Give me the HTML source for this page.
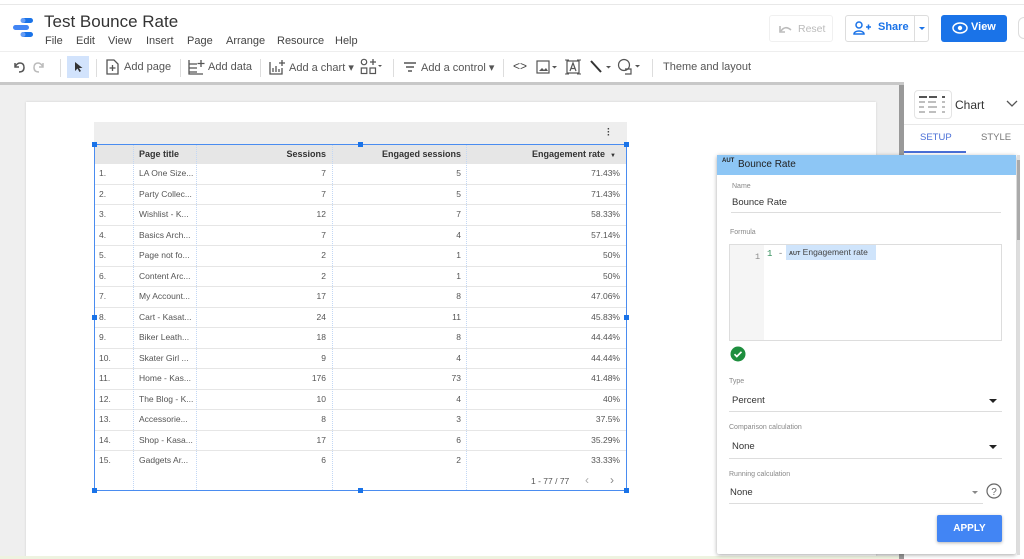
<!DOCTYPE html>
<html><head><meta charset="utf-8">
<style>
*{box-sizing:border-box;margin:0;padding:0}
body{width:1024px;height:559px;overflow:hidden;position:relative;background:#fff;font-family:"Liberation Sans",sans-serif;color:#3c4043}
.a{position:absolute}
.tb{font-size:11px;color:#555;white-space:nowrap;position:absolute;top:61px}
.sep{position:absolute;top:59px;width:1px;height:18px;background:#ddd}
.row{position:absolute;left:95px;width:531px;height:20.5px;border-bottom:1px solid #e6e6e6;font-size:8.5px;color:#555}
.row span{position:absolute;top:4px}
.vl{position:absolute;top:144px;height:346px;border-left:1px dotted #c2d7f5}
.h{position:absolute;width:5px;height:5px;background:#1a73e8}
.lbl{position:absolute;font-size:7px;color:#888}
.val{position:absolute;font-size:9.5px;color:#333}
.ul{position:absolute;height:1px;background:#ddd}
.m{position:absolute;top:35px;font-size:11px;color:#444}
</style></head><body>
<div class="a" style="left:0;top:4px;width:1024px;height:1px;background:#e8e8e8"></div>
<svg class="a" style="left:12px;top:16px" width="24" height="24" viewBox="0 0 24 24"><rect x="9" y="2" width="12" height="5" rx="2.5" fill="#1a73e8"/><rect x="1" y="9" width="16" height="5" rx="2.5" fill="#4285f4"/><rect x="9" y="16" width="12" height="5" rx="2.5" fill="#1a73e8"/><circle cx="11" cy="4.5" r="2.5" fill="#669df6"/><circle cx="11" cy="18.5" r="2.5" fill="#669df6"/></svg>
<div class="a" style="left:44px;top:12px;font-size:17px;color:#333">Test Bounce Rate</div>
<span class="m" style="left:45px">File</span><span class="m" style="left:76px">Edit</span><span class="m" style="left:108px">View</span><span class="m" style="left:146px">Insert</span><span class="m" style="left:187px">Page</span><span class="m" style="left:226px">Arrange</span><span class="m" style="left:277px">Resource</span><span class="m" style="left:335px">Help</span>
<div class="a" style="left:769px;top:15px;width:64px;height:27px;border:1px solid #f0f0f0;border-radius:3px;font-size:10.5px;color:#bbb;padding:7px 0 0 28px">Reset</div>
<svg class="a" style="left:779px;top:23px" width="14" height="10"><path d="M2 8 Q6 2 12 7" stroke="#bbb" stroke-width="1.6" fill="none"/><path d="M1 3v6h5" stroke="#bbb" stroke-width="1.6" fill="none"/></svg>
<div class="a" style="left:845px;top:15px;width:84px;height:27px;border:1px solid #ddd;border-radius:3px"></div>
<div class="a" style="left:914px;top:15px;width:1px;height:27px;background:#ddd"></div>
<svg class="a" style="left:853px;top:21px" width="18" height="14"><circle cx="6" cy="4" r="3" stroke="#1a73e8" stroke-width="1.5" fill="none"/><path d="M1 13c0-4 10-4 10 0z" stroke="#1a73e8" stroke-width="1.5" fill="none"/><path d="M13 6h5M15.5 3.5v5" stroke="#1a73e8" stroke-width="1.5"/></svg>
<div class="a" style="left:878px;top:21px;font-size:11px;color:#1a73e8;font-weight:bold">Share</div>
<div class="a" style="left:919px;top:27px;border:3px solid transparent;border-top:3px solid #1a73e8"></div>
<div class="a" style="left:941px;top:15px;width:66px;height:27px;background:#1a73e8;border-radius:3px"></div>
<svg class="a" style="left:952px;top:22px" width="16" height="12"><ellipse cx="8" cy="6" rx="7" ry="5" stroke="#fff" stroke-width="1.5" fill="none"/><circle cx="8" cy="6" r="2.2" fill="#fff"/></svg>
<div class="a" style="left:971px;top:21px;font-size:11px;color:#fff;font-weight:bold">View</div>
<div class="a" style="left:1018px;top:17px;width:12px;height:22px;border:1px solid #ddd;border-radius:11px"></div>
<div class="a" style="left:0;top:51px;width:1024px;height:1px;background:#eee"></div>
<svg class="a" style="left:12px;top:60px" width="34" height="14"><path d="M3 3v4h4M3 7 Q5 3 8 3 Q12 3 12 7.5 Q12 12 7 12" stroke="#555" stroke-width="1.5" fill="none"/><path d="M31 3v4h-4M31 7 Q29 3 26 3 Q22 3 22 7.5 Q22 12 27 12" stroke="#bbb" stroke-width="1.5" fill="none"/></svg>
<div class="sep" style="left:60px"></div>
<div class="a" style="left:67px;top:56px;width:22px;height:22px;background:#d2e3fc"></div>
<svg class="a" style="left:74px;top:61px" width="10" height="12"><path d="M1 1 L1 10 L3.5 7.5 L5.5 11 L7 10 L5 7 L8.5 7 Z" fill="#333"/></svg>
<div class="sep" style="left:96px"></div>
<svg class="a" style="left:106px;top:59px" width="13" height="16"><path d="M1 1h7l4 4v10H1z" stroke="#555" stroke-width="1.3" fill="none"/><path d="M6.5 6v6M3.5 9h6" stroke="#555" stroke-width="1.3"/></svg>
<div class="tb" style="left:124px">Add page</div>
<div class="sep" style="left:180px"></div>
<svg class="a" style="left:188px;top:59px" width="17" height="16"><path d="M1 1v14h14M1 5h8M1 9h8M1 13h8" stroke="#555" stroke-width="1.3" fill="none"/><path d="M13 1v7M9.5 4.5h7" stroke="#555" stroke-width="1.3"/></svg>
<div class="tb" style="left:208px">Add data</div>
<div class="sep" style="left:260px"></div>
<svg class="a" style="left:269px;top:59px" width="17" height="16"><path d="M1 3v12h12V9" stroke="#555" stroke-width="1.3" fill="none"/><path d="M4 13V9M7 13V7M10 13v-3M13 1v6M10 4h6" stroke="#555" stroke-width="1.3"/></svg>
<div class="tb" style="left:289px">Add a chart ▾</div>
<svg class="a" style="left:360px;top:58px" width="22" height="17"><circle cx="4" cy="4" r="2.7" stroke="#555" stroke-width="1.2" fill="none"/><path d="M10 4h6M13 1v6" stroke="#555" stroke-width="1.3"/><rect x="1.3" y="10" width="5.5" height="5.5" stroke="#555" stroke-width="1.2" fill="none"/><rect x="10" y="10" width="5.5" height="5.5" stroke="#555" stroke-width="1.2" fill="none"/><path d="M18 7l2 2 2-2" fill="#555"/></svg>
<div class="sep" style="left:393px"></div>
<svg class="a" style="left:403px;top:61px" width="14" height="12"><path d="M1 2h12M3 6h8M5 10h4" stroke="#555" stroke-width="1.4"/></svg>
<div class="tb" style="left:421px">Add a control ▾</div>
<div class="sep" style="left:503px"></div>
<div class="tb" style="left:513px;font-size:12px;top:59px;color:#444">&lt;&gt;</div>
<svg class="a" style="left:536px;top:59px" width="24" height="16"><rect x="1" y="2" width="12" height="12" stroke="#555" stroke-width="1.2" fill="none"/><path d="M3 12l3-3 2 2 2-2 2 3z" fill="#555"/><path d="M16 7l2.5 2.5L21 7" fill="#555"/></svg>
<svg class="a" style="left:565px;top:59px" width="16" height="16"><rect x="2" y="2" width="12" height="12" stroke="#555" stroke-width="1.2" fill="none"/><path d="M5 12l3-8 3 8M6 9.5h4" stroke="#555" stroke-width="1.2" fill="none"/><path d="M0 1h4M12 1h4M0 15h4M12 15h4" stroke="#555"/></svg>
<svg class="a" style="left:589px;top:59px" width="26" height="16"><path d="M2 2l10 11" stroke="#333" stroke-width="2"/><path d="M17 7l2.5 2.5L22 7" fill="#555"/></svg>
<svg class="a" style="left:617px;top:58px" width="26" height="18"><circle cx="7" cy="7" r="5.5" stroke="#555" stroke-width="1.2" fill="none"/><path d="M8 11h6V16H8" stroke="#555" stroke-width="1.2" fill="none"/><path d="M18 7l2.5 2.5L23 7" fill="#555"/></svg>
<div class="sep" style="left:652px"></div>
<div class="tb" style="left:663px">Theme and layout</div>
<div class="a" style="left:0;top:82px;width:904px;height:3px;background:#c8c8c8"></div>
<div class="a" style="left:0;top:85px;width:900px;height:474px;background:#efefef"></div>
<div class="a" style="left:26px;top:102px;width:850px;height:457px;background:#fff;box-shadow:0 0 2px #ccc"></div>
<div class="a" style="left:0;top:556px;width:900px;height:3px;background:#eef3e0"></div>
<div class="a" style="left:899px;top:85px;width:5px;height:474px;background:#999"></div>
<div class="a" style="left:94px;top:122px;width:533px;height:22px;background:#eeeeee"></div>
<div class="a" style="left:607px;top:128px;font-size:10px;color:#444;font-weight:bold;line-height:3px">·<br>·<br>·</div>
<div class="a" style="left:95px;top:144px;width:531px;height:20px;background:#e6e6e6;font-size:9px;font-weight:bold;color:#333">
<span class="a" style="left:44px;top:5px">Page title</span>
<span class="a" style="right:300px;top:5px">Sessions</span>
<span class="a" style="right:165px;top:5px">Engaged sessions</span>
<span class="a" style="right:10px;top:5px">Engagement rate &nbsp;<small style="font-size:6px">▼</small></span></div>
<div class="row" style="top:164px"><span style="left:4px">1.</span><span style="left:44px">LA One Size...</span><span style="right:300px">7</span><span style="right:165px">5</span><span style="right:6px">71.43%</span></div>
<div class="row" style="top:184.5px"><span style="left:4px">2.</span><span style="left:44px">Party Collec...</span><span style="right:300px">7</span><span style="right:165px">5</span><span style="right:6px">71.43%</span></div>
<div class="row" style="top:205px"><span style="left:4px">3.</span><span style="left:44px">Wishlist - K...</span><span style="right:300px">12</span><span style="right:165px">7</span><span style="right:6px">58.33%</span></div>
<div class="row" style="top:225.5px"><span style="left:4px">4.</span><span style="left:44px">Basics Arch...</span><span style="right:300px">7</span><span style="right:165px">4</span><span style="right:6px">57.14%</span></div>
<div class="row" style="top:246px"><span style="left:4px">5.</span><span style="left:44px">Page not fo...</span><span style="right:300px">2</span><span style="right:165px">1</span><span style="right:6px">50%</span></div>
<div class="row" style="top:266.5px"><span style="left:4px">6.</span><span style="left:44px">Content Arc...</span><span style="right:300px">2</span><span style="right:165px">1</span><span style="right:6px">50%</span></div>
<div class="row" style="top:287px"><span style="left:4px">7.</span><span style="left:44px">My Account...</span><span style="right:300px">17</span><span style="right:165px">8</span><span style="right:6px">47.06%</span></div>
<div class="row" style="top:307.5px"><span style="left:4px">8.</span><span style="left:44px">Cart - Kasat...</span><span style="right:300px">24</span><span style="right:165px">11</span><span style="right:6px">45.83%</span></div>
<div class="row" style="top:328px"><span style="left:4px">9.</span><span style="left:44px">Biker Leath...</span><span style="right:300px">18</span><span style="right:165px">8</span><span style="right:6px">44.44%</span></div>
<div class="row" style="top:348.5px"><span style="left:4px">10.</span><span style="left:44px">Skater Girl ...</span><span style="right:300px">9</span><span style="right:165px">4</span><span style="right:6px">44.44%</span></div>
<div class="row" style="top:369px"><span style="left:4px">11.</span><span style="left:44px">Home - Kas...</span><span style="right:300px">176</span><span style="right:165px">73</span><span style="right:6px">41.48%</span></div>
<div class="row" style="top:389.5px"><span style="left:4px">12.</span><span style="left:44px">The Blog - K...</span><span style="right:300px">10</span><span style="right:165px">4</span><span style="right:6px">40%</span></div>
<div class="row" style="top:410px"><span style="left:4px">13.</span><span style="left:44px">Accessorie...</span><span style="right:300px">8</span><span style="right:165px">3</span><span style="right:6px">37.5%</span></div>
<div class="row" style="top:430.5px"><span style="left:4px">14.</span><span style="left:44px">Shop - Kasa...</span><span style="right:300px">17</span><span style="right:165px">6</span><span style="right:6px">35.29%</span></div>
<div class="row" style="top:451px;border-bottom:none"><span style="left:4px">15.</span><span style="left:44px">Gadgets Ar...</span><span style="right:300px">6</span><span style="right:165px">2</span><span style="right:6px">33.33%</span></div>
<div class="vl" style="left:133px"></div><div class="vl" style="left:196px"></div><div class="vl" style="left:332px"></div><div class="vl" style="left:466px"></div>
<div class="a" style="left:531px;top:476px;font-size:8.5px;color:#555">1 - 77 / 77</div>
<div class="a" style="left:585px;top:473px;font-size:12px;color:#aaa">‹</div>
<div class="a" style="left:610px;top:473px;font-size:12px;color:#888">›</div>
<div class="a" style="left:94px;top:144px;width:533px;height:347px;border:1px solid #4a8cf0"></div>
<div class="h" style="left:92px;top:142px"></div><div class="h" style="left:358px;top:142px"></div><div class="h" style="left:624px;top:142px"></div>
<div class="h" style="left:92px;top:315px"></div><div class="h" style="left:624px;top:315px"></div>
<div class="h" style="left:92px;top:488px"></div><div class="h" style="left:358px;top:488px"></div><div class="h" style="left:624px;top:488px"></div>
<div class="a" style="left:904px;top:85px;width:120px;height:474px;background:#fff"></div>
<div class="a" style="left:914px;top:90px;width:38px;height:29px;border:1px solid #e4e4e4;border-radius:4px"></div>
<svg class="a" style="left:917px;top:95px" width="32" height="20"><path d="M2 2h8M12 2h8M25 2h3" stroke="#555" stroke-width="2"/><path d="M2 7h6M11 7h8M25 7h3M2 12h5M11 12h9M25 12h3M2 17h6M12 17h7M25 17h3" stroke="#aaa" stroke-width="1.6"/></svg>
<div class="a" style="left:955px;top:98px;font-size:12px;color:#333">Chart</div>
<svg class="a" style="left:1006px;top:100px" width="12" height="8"><path d="M1 1l5 5 5-5" stroke="#555" stroke-width="1.3" fill="none"/></svg>
<div class="a" style="left:904px;top:124px;width:120px;height:1px;background:#e8e8e8"></div>
<div class="a" style="left:920px;top:132px;font-size:9.5px;color:#4a6fd6">SETUP</div>
<div class="a" style="left:981px;top:132px;font-size:9.5px;color:#777">STYLE</div>
<div class="a" style="left:904px;top:151px;width:62px;height:2px;background:#4a6fd6"></div>
<div class="a" style="left:717px;top:155px;width:299px;height:399px;background:#fff;box-shadow:0 1px 4px rgba(0,0,0,.35);border-radius:2px"></div>
<div class="a" style="left:717px;top:155px;width:299px;height:20px;background:#8dc6f5"></div>
<div class="a" style="left:722px;top:158px;font-size:6px;font-weight:bold;color:#222">AUT</div>
<div class="a" style="left:738px;top:159px;font-size:10px;color:#222">Bounce Rate</div>
<div class="lbl" style="left:732px;top:183px">Name</div>
<div class="val" style="left:732px;top:197px">Bounce Rate</div>
<div class="ul" style="left:731px;top:212px;width:270px"></div>
<div class="lbl" style="left:730px;top:229px">Formula</div>
<div class="a" style="left:729px;top:244px;width:273px;height:97px;border:1px solid #ddd;background:#fff"></div>
<div class="a" style="left:730px;top:245px;width:34px;height:95px;background:#f5f5f5"></div>
<div class="a" style="left:755px;top:252px;font-size:8.5px;color:#888;font-family:'Liberation Mono',monospace">1</div>
<div class="a" style="left:767px;top:249px;font-size:9px;color:#2e8b57;font-family:'Liberation Mono',monospace">1 <span style="color:#888">-</span></div>
<div class="a" style="left:786px;top:245px;width:90px;height:15px;background:#cfe4fb;font-size:8.5px;color:#444;padding:2px 0 0 3px"><b style="font-size:5.5px">AUT</b> Engagement rate</div>
<svg class="a" style="left:730px;top:346px" width="16" height="16"><circle cx="8" cy="8" r="7.5" fill="#1e8e3e"/><path d="M4.5 8.2l2.3 2.3 4.7-4.7" stroke="#fff" stroke-width="1.7" fill="none"/></svg>
<div class="lbl" style="left:729px;top:378px">Type</div>
<div class="val" style="left:732px;top:395px">Percent</div>
<div class="a" style="left:989px;top:399px;border:4px solid transparent;border-top:4px solid #222"></div>
<div class="ul" style="left:729px;top:411px;width:273px"></div>
<div class="lbl" style="left:729px;top:424px">Comparison calculation</div>
<div class="val" style="left:732px;top:441px">None</div>
<div class="a" style="left:989px;top:445px;border:4px solid transparent;border-top:4px solid #222"></div>
<div class="ul" style="left:729px;top:458px;width:273px"></div>
<div class="lbl" style="left:729px;top:471px">Running calculation</div>
<div class="val" style="left:730px;top:487px">None</div>
<div class="a" style="left:972px;top:491px;border:3px solid transparent;border-top:3px solid #888"></div>
<div class="ul" style="left:729px;top:503px;width:254px"></div>
<svg class="a" style="left:986px;top:483px" width="16" height="16"><circle cx="8" cy="8" r="7" stroke="#666" stroke-width="1.2" fill="none"/><text x="8" y="12" text-anchor="middle" font-size="10" fill="#666" font-family="Liberation Sans">?</text></svg>
<div class="a" style="left:937px;top:515px;width:65px;height:27px;background:#4285f4;border-radius:2px;box-shadow:0 1px 3px rgba(0,0,0,.3);color:#fff;font-size:10px;font-weight:bold;text-align:center;line-height:27px">APPLY</div>
<div class="a" style="left:1017px;top:155px;width:3px;height:400px;background:#ddd"></div>
<div class="a" style="left:1017px;top:160px;width:3px;height:80px;background:#aaa"></div>
</body></html>
